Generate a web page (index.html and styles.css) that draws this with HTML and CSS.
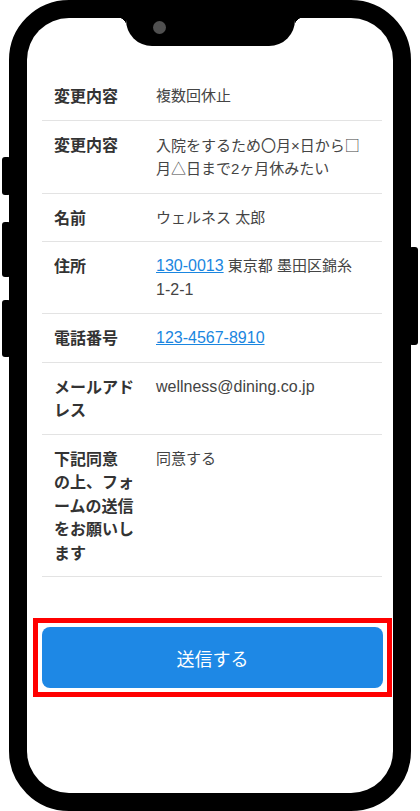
FILE: index.html
```html
<!DOCTYPE html>
<html lang="ja">
<head>
<meta charset="utf-8">
<title>確認</title>
<link rel="stylesheet" href="styles.css">
</head>
<body>
<div class="phone">
  <span class="side-btn btn-l1"></span>
  <span class="side-btn btn-l2"></span>
  <span class="side-btn btn-l3"></span>
  <span class="side-btn btn-r1"></span>
  <div class="notch"><span class="camera"></span></div>
  <div class="screen">
    <div class="table">
      <div class="row">
        <div class="label">変更内容</div>
        <div class="value">複数回休止</div>
      </div>
      <div class="row">
        <div class="label">変更内容</div>
        <div class="value">入院をするため〇月×日から<span class="cjk">□</span>月△日まで2ヶ月休みたい</div>
      </div>
      <div class="row">
        <div class="label">名前</div>
        <div class="value">ウェルネス 太郎</div>
      </div>
      <div class="row">
        <div class="label">住所</div>
        <div class="value"><a class="link latin" href="#">130-0013</a> 東京都 墨田区錦糸<span class="nowrap latin">1-2-1</span></div>
      </div>
      <div class="row">
        <div class="label">電話番号</div>
        <div class="value"><a class="link latin" href="#">123-4567-8910</a></div>
      </div>
      <div class="row">
        <div class="label">メールアドレス</div>
        <div class="value"><span class="latin">wellness@dining.co.jp</span></div>
      </div>
      <div class="row">
        <div class="label">下記同意<br>の上、フォ<br>ームの送信<br>をお願いし<br>ます</div>
        <div class="value">同意する</div>
      </div>
    </div>
    <div class="highlight">
      <button class="submit" type="button">送信する</button>
    </div>
  </div>
</div>
</body>
</html>
```

FILE: styles.css
```css
html, body {
  margin: 0;
  padding: 0;
  background: #fff;
}

body {
  font-family: "Liberation Sans", "Noto Sans CJK JP", sans-serif;
  width: 420px;
  height: 811px;
  overflow: hidden;
}

.phone {
  position: relative;
  box-sizing: border-box;
  width: 402px;
  height: 811px;
  margin-left: 9px;
  border: 18px solid #000;
  border-radius: 60px;
  background: #000;
}

.side-btn {
  position: absolute;
  width: 9px;
  background: #000;
  border-radius: 3px;
}

.btn-l1 { left: -25px; top: 139px; height: 38px; }
.btn-l2 { left: -25px; top: 204px; height: 55px; }
.btn-l3 { left: -25px; top: 282px; height: 57px; }
.btn-r1 { right: -25px; top: 229px; height: 98px; }

.screen {
  box-sizing: border-box;
  height: 100%;
  background: #fff;
  border-radius: 42px;
  overflow: hidden;
  padding: 54px 11px 0 15px;
}

.notch {
  position: absolute;
  top: -2px;
  left: 99px;
  width: 169px;
  height: 30px;
  background: #000;
  border-radius: 0 0 26px 26px;
  z-index: 2;
}

.notch::before,
.notch::after {
  content: "";
  position: absolute;
  top: 2px;
  width: 8px;
  height: 8px;
}

.notch::before {
  left: -8px;
  background: radial-gradient(circle at 0 100%, transparent 8px, #000 8.5px);
}

.notch::after {
  right: -8px;
  background: radial-gradient(circle at 100% 100%, transparent 8px, #000 8.5px);
}

.camera {
  position: absolute;
  left: 27px;
  top: 5px;
  width: 13px;
  height: 13px;
  border-radius: 50%;
  background: #505050;
}

.table {
  display: flex;
  flex-direction: column;
}

.row {
  display: grid;
  grid-template-columns: 90px 1fr;
  column-gap: 12px;
  padding: 12px 12px;
  border-bottom: 1px solid #e3e3e3;
  line-height: 23.5px;
}

.label {
  font-size: 16px;
  font-weight: bold;
  color: #333;
  font-family: "Noto Sans CJK JP", sans-serif;
}

.value {
  font-size: 15px;
  color: #444;
}

.latin {
  font-size: 16px;
}

.cjk {
  font-family: "Noto Sans CJK JP", sans-serif;
}

.nowrap {
  white-space: nowrap;
}

.link {
  color: #1a86e0;
  text-decoration: underline;
}

.highlight {
  margin: 41px -10px 0 -9px;
  border: 5px solid #ff0000;
  padding: 4px;
}

.submit {
  display: block;
  width: 100%;
  height: 61px;
  border: none;
  border-radius: 8px;
  background: #1e88e5;
  color: #fff;
  font-family: "Noto Sans CJK JP", sans-serif;
  font-size: 18px;
  cursor: pointer;
}
```
